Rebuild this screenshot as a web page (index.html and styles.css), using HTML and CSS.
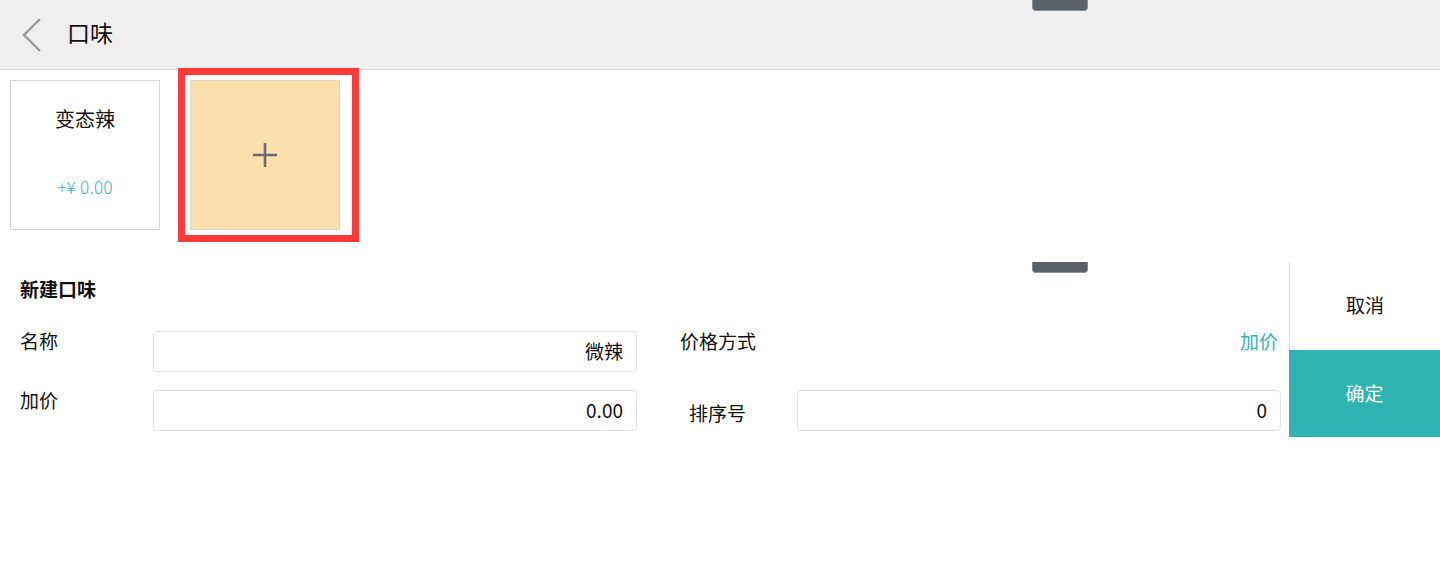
FILE: index.html
```html
<!DOCTYPE html>
<html lang="zh-CN">
<head>
<meta charset="utf-8">
<title>口味</title>
<link rel="stylesheet" href="styles.css">
</head>
<body>
<div class="page">
  <header class="topbar">
    <svg class="back" width="20" height="34" viewBox="0 0 20 34"><path d="M18 1 L2 17 L18 33" fill="none" stroke="#9a9a9a" stroke-width="2.4"/></svg>
    <h1 class="title">口味</h1>
  </header>

  <section class="tiles">
    <div class="tile">
      <div class="tile-name">变态辣</div>
      <div class="tile-price">+¥ 0.00</div>
    </div>
    <div class="tile-wrap">
      <div class="tile tile-add">
        <svg width="24" height="24" viewBox="0 0 24 24"><path d="M12 0 V24 M0 12 H24" stroke="#6b6b6b" stroke-width="2.6"/></svg>
      </div>
      <div class="highlight"></div>
    </div>
  </section>

  <section class="editor">
    <div class="form">
      <div class="form-title">新建口味</div>
      <div class="row">
        <div class="field">
          <div class="label">名称</div>
          <div class="input">微辣</div>
        </div>
        <div class="field field-right">
          <div class="label">价格方式</div>
          <div class="value">加价</div>
        </div>
      </div>
      <div class="row">
        <div class="field">
          <div class="label">加价</div>
          <div class="input">0.00</div>
        </div>
        <div class="field field-right">
          <div class="label label-sort">排序号</div>
          <div class="input input-sort">0</div>
        </div>
      </div>
    </div>
    <aside class="actions">
      <div class="btn-cancel">取消</div>
      <div class="btn-ok">确定</div>
    </aside>
  </section>

  <div class="handle handle-top"></div>
  <div class="handle handle-mid"></div>
</div>
</body>
</html>
```

FILE: styles.css
```css
* { box-sizing: border-box; }
html, body { margin: 0; padding: 0; background: #fff; }
body {
  font-family: "Noto Sans CJK SC", "Noto Sans", sans-serif;
  color: #111;
  width: 1440px;
  height: 564px;
  overflow: hidden;
}
.page { position: relative; width: 1440px; height: 564px; }

.topbar {
  height: 70px;
  background: #efefef;
  border-bottom: 1px solid #d4d4d4;
  display: flex;
  align-items: center;
  padding-left: 22px;
}
.back { display: block; margin-top: 1px; }
.title {
  margin: 0 0 5px 25px;
  font-size: 23px;
  font-weight: 400;
  line-height: 30px;
  color: #111;
}

.tiles {
  display: flex;
  gap: 30px;
  padding: 10px 0 0 10px;
  height: 192px;
}
.tile {
  width: 150px;
  height: 150px;
  border: 1px solid #d6d6d6;
  background: #fff;
  display: flex;
  flex-direction: column;
  align-items: center;
}
.tile-name {
  font-size: 20px;
  line-height: 26px;
  margin-top: 25px;
}
.tile-price {
  margin-top: 45px;
  font-size: 17px;
  line-height: 20px;
  color: #3ab5bc;
  font-family: "Noto Sans CJK SC", "Noto Sans", sans-serif;
  font-weight: 300;
  letter-spacing: 0.3px;
}
.tile-wrap { position: relative; }
.tile-add {
  background: #fddfae;
  border-color: #dcd6cc;
  justify-content: center;
}
.highlight {
  position: absolute;
  left: -12px;
  top: -12px;
  width: 181px;
  height: 174px;
  border: 7px solid #fd3a3a;
}

.editor {
  display: flex;
  height: 176px;
}
.form {
  flex: 1;
  padding: 15px 0 0 20px;
}
.form-title {
  font-size: 19px;
  font-weight: 700;
  line-height: 24px;
  margin-bottom: 30px;
}
.row {
  display: flex;
  height: 41px;
  margin-bottom: 18px;
}
.field {
  display: flex;
  width: 617px;
}
.field-right {
  width: 601px;
  margin-left: 43px;
}
.label {
  width: 133px;
  font-size: 19px;
  line-height: 20px;
  flex: none;
}
.field-right .label { width: 117px; }
.label-sort {
  padding-left: 9px;
  align-self: center;
  padding-top: 4px;
}
.value {
  flex: 1;
  text-align: right;
  font-size: 19px;
  line-height: 20px;
  color: #36b5be;
  padding-right: 3px;
}
.input {
  flex: 1;
  height: 41px;
  border: 1px solid #e2e2e2;
  border-radius: 4px;
  text-align: right;
  padding-right: 13px;
  font-size: 19px;
  line-height: 37px;
  color: #111;
}

.actions {
  width: 151px;
  flex: none;
  display: flex;
  flex-direction: column;
}
.btn-cancel {
  height: 88px;
  border-left: 1px solid #e3e3e3;
  display: flex;
  align-items: center;
  justify-content: center;
  font-size: 19px;
  color: #111;
  padding-bottom: 3px;
}
.btn-ok {
  height: 87px;
  background: #2fb2b2;
  color: #fff;
  display: flex;
  align-items: center;
  justify-content: center;
  font-size: 19px;
  padding-bottom: 2px;
}

.handle {
  position: absolute;
  left: 1032px;
  width: 56px;
  height: 11px;
  background: #5a6168;
  border: 1px solid #8a9096;
  border-top: none;
  border-radius: 0 0 4px 4px;
}
.handle-top { top: 0; }
.handle-mid { top: 262px; }
```
